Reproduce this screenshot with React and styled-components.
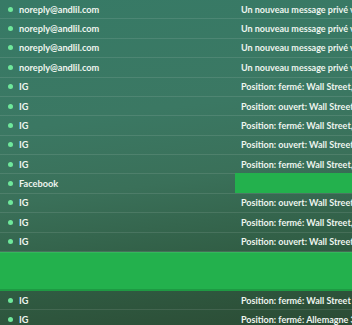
import React from "react"
import styled, { createGlobalStyle } from "styled-components"

const GlobalStyle = createGlobalStyle`
  html, body {
    margin: 0;
    padding: 0;
    overflow: hidden;
  }
  body {
    font-family: "Lato", "Liberation Sans", sans-serif;
  }
`

const Board = styled.div`
  width: 352px;
  height: 325px;
  overflow: hidden;
  background: linear-gradient(172deg, #377a66 0%, #3b7863 35%, #3a7059 55%, #305c43 78%, #2b4b34 100%);
`

const Row = styled.div`
  display: grid;
  grid-template-columns: 235px 1fr;
  height: 19.38px;
  box-sizing: border-box;
  border-bottom: 1px solid rgba(255, 255, 255, 0.1);
`

const Sender = styled.div`
  display: flex;
  align-items: center;
  gap: 6px;
  padding-left: 8px;
  color: #eef5ef;
  font-size: 9.2px;
  font-weight: 700;
  white-space: nowrap;
`

const Dot = styled.span`
  width: 5px;
  height: 5px;
  border-radius: 50%;
  background: #6fe89b;
  flex: none;
`

const Subject = styled.div`
  display: flex;
  align-items: center;
  padding-left: 6px;
  color: #eef5ef;
  font-size: 9px;
  font-weight: 700;
  white-space: nowrap;
  overflow: hidden;
  background: ${props => (props.highlight ? "#23b14d" : "transparent")};
  margin-top: ${props => (props.highlight ? "-1px" : "0")};
`

const Band = styled.div`
  height: 36px;
  background: #23b14d;
  border-top: 1px solid rgba(255, 255, 255, 0.08);
  border-bottom: 2px solid rgba(0, 0, 0, 0.12);
`

const mails = [
  { from: "noreply@andlil.com", subject: "Un nouveau message privé vous attend" },
  { from: "noreply@andlil.com", subject: "Un nouveau message privé vous attend" },
  { from: "noreply@andlil.com", subject: "Un nouveau message privé vous attend" },
  { from: "noreply@andlil.com", subject: "Un nouveau message privé vous attend" },
  { from: "IG", subject: "Position: fermé: Wall Street, +12" },
  { from: "IG", subject: "Position: ouvert: Wall Street, +2" },
  { from: "IG", subject: "Position: fermé: Wall Street, +12" },
  { from: "IG", subject: "Position: ouvert: Wall Street, +2" },
  { from: "IG", subject: "Position: fermé: Wall Street, +12" },
  { from: "Facebook", subject: "", highlight: true },
  { from: "IG", subject: "Position: ouvert: Wall Street, +2" },
  { from: "IG", subject: "Position: fermé: Wall Street, +12" },
  { from: "IG", subject: "Position: ouvert: Wall Street, +2" }
]

const after = [
  { from: "IG", subject: "Position: fermé: Wall Street à 24" },
  { from: "IG", subject: "Position: fermé: Allemagne 30" }
]

const MailRow = ({ mail }) => (
  <Row>
    <Sender>
      <Dot />
      {mail.from}
    </Sender>
    <Subject highlight={mail.highlight}>{mail.subject}</Subject>
  </Row>
)

export default function App() {
  return (
    <>
      <GlobalStyle />
      <Board>
        {mails.map((mail, index) => (
          <MailRow key={index} mail={mail} />
        ))}
        <Band />
        {after.map((mail, index) => (
          <MailRow key={index} mail={mail} />
        ))}
      </Board>
    </>
  )
}
